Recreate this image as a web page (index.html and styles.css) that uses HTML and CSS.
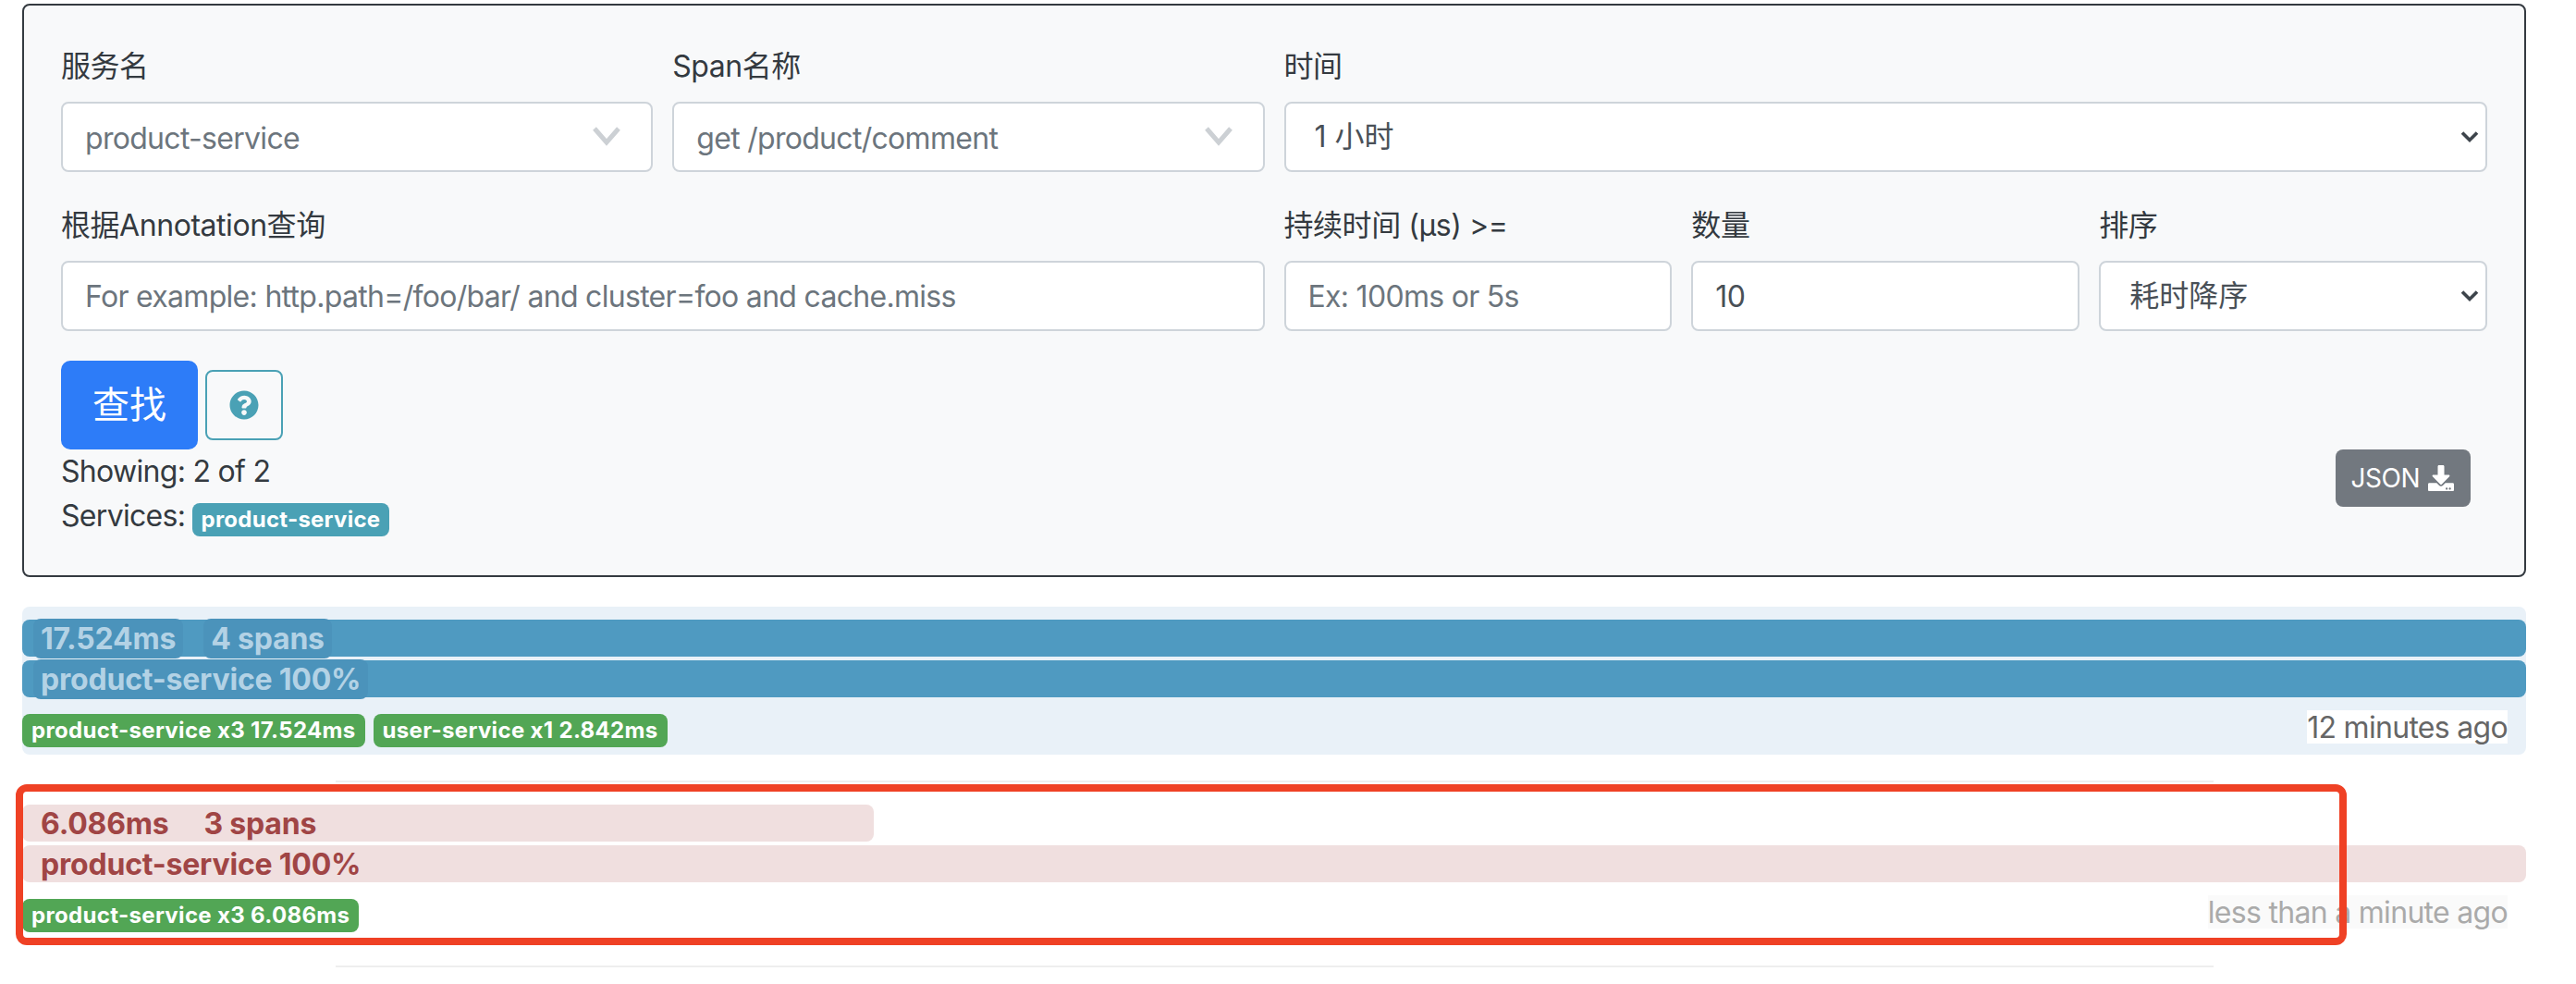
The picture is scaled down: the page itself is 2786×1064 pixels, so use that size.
FILE: index.html
```html
<!DOCTYPE html>
<html lang="zh">
<head>
<meta charset="utf-8">
<title>Zipkin</title>
<link rel="stylesheet" href="styles.css">
</head>
<body>
<main class="page">
  <form class="panel">
    <div class="form-grid">
      <div class="field col-3">
        <label class="label">服务名</label>
        <div class="control combo"><span class="combo-value">product-service</span>
          <svg class="combo-arrow" viewBox="0 0 32 22"><path d="M3 3 16 18 29 3" /></svg></div>
      </div>
      <div class="field col-3">
        <label class="label">Span名称</label>
        <div class="control combo"><span class="combo-value">get /product/comment</span>
          <svg class="combo-arrow" viewBox="0 0 32 22"><path d="M3 3 16 18 29 3" /></svg></div>
      </div>
      <div class="field col-6">
        <label class="label">时间</label>
        <div class="select-wrap">
          <select class="control select"><option>1 小时</option></select>
          <svg class="select-arrow" viewBox="0 0 20 14"><path d="M2 2.500 10 10.500 18 2.500" /></svg>
        </div>
      </div>
      <div class="field col-6">
        <label class="label">根据Annotation查询</label>
        <input class="control input" placeholder="For example: http.path=/foo/bar/ and cluster=foo and cache.miss">
      </div>
      <div class="field col-2">
        <label class="label">持续时间 (μs) &gt;=</label>
        <input class="control input" placeholder="Ex: 100ms or 5s">
      </div>
      <div class="field col-2">
        <label class="label">数量</label>
        <input class="control input" value="10">
      </div>
      <div class="field col-2">
        <label class="label">排序</label>
        <div class="select-wrap">
          <select class="control select"><option>耗时降序</option></select>
          <svg class="select-arrow" viewBox="0 0 20 14"><path d="M2 2.500 10 10.500 18 2.500" /></svg>
        </div>
      </div>
    </div>
    <div class="actions">
      <button type="button" class="btn-search">查找</button>
      <button type="button" class="btn-help" aria-label="help">
        <svg class="help-icon" viewBox="0 0 512 512"><path d="M504 256c0 136.997-111.043 248-248 248S8 392.997 8 256C8 119.083 119.043 8 256 8s248 111.083 248 248zM262.655 90c-54.497 0-89.255 22.957-116.549 63.758-3.536 5.286-2.353 12.415 2.715 16.258l34.699 26.31c5.205 3.947 12.621 3.008 16.665-2.122 17.864-22.658 30.113-35.797 57.303-35.797 20.429 0 45.698 13.148 45.698 32.958 0 14.976-12.363 22.667-32.534 33.976C247.128 238.528 216 254.941 216 296v4c0 6.627 5.373 12 12 12h56c6.627 0 12-5.373 12-12v-1.333c0-28.462 83.186-29.647 83.186-106.667 0-58.002-60.165-102-116.531-102zM256 338c-25.365 0-46 20.635-46 46 0 25.364 20.635 46 46 46s46-20.636 46-46c0-25.365-20.635-46-46-46z"/></svg>
      </button>
    </div>
    <div class="summary">
      <div class="summary-text">
        <div class="summary-line">Showing: 2 of 2</div>
        <div class="summary-line">Services: <span class="badge-service">product-service</span></div>
      </div>
      <button type="button" class="btn-json">JSON
        <svg class="json-icon" viewBox="0 0 512 512"><path d="M216 0h80c13.3 0 24 10.700 24 24v168h87.700c17.800 0 26.700 21.500 14.100 34.100L269.700 378.300c-7.500 7.500-19.800 7.500-27.300 0L90.100 226.100c-12.600-12.600-3.700-34.100 14.100-34.100H192V24c0-13.300 10.700-24 24-24zm296 376v112c0 13.300-10.700 24-24 24H24c-13.300 0-24-10.700-24-24V376c0-13.300 10.700-24 24-24h146.700l49 49c20.100 20.100 52.500 20.100 72.600 0l49-49H488c13.300 0 24 10.700 24 24zm-124 88c0-11-9-20-20-20s-20 9-20 20 9 20 20 20 20-9 20-20zm64 0c0-11-9-20-20-20s-20 9-20 20 9 20 20 20 20-9 20-20z"/></svg>
      </button>
    </div>
  </form>

  <section class="trace trace-blue">
    <div class="bar bar-blue">
      <span class="bar-label first">17.524ms</span><span class="bar-label second">4 spans</span>
    </div>
    <div class="bar bar-blue">
      <span class="bar-label first">product-service 100%</span>
    </div>
    <div class="trace-foot">
      <div class="tags">
        <span class="tag">product-service x3 17.524ms</span>
        <span class="tag">user-service x1 2.842ms</span>
      </div>
      <time class="ago ago-dark">12 minutes ago</time>
    </div>
  </section>
  <hr class="rule">
  <section class="trace trace-pale">
    <div class="bar bar-pink" style="width:34%">
      <span class="bar-label first">6.086ms</span><span class="bar-label second">3 spans</span>
    </div>
    <div class="bar bar-pink">
      <span class="bar-label first">product-service 100%</span>
    </div>
    <div class="trace-foot">
      <div class="tags">
        <span class="tag">product-service x3 6.086ms</span>
      </div>
      <time class="ago ago-light">less than a minute ago</time>
    </div>
  </section>
  <hr class="rule">
  <div class="annotation"></div>
</main>
</body>
</html>
```

FILE: styles.css
```css
* { box-sizing: border-box; }

html, body {
  margin: 0;
  background: #fff;
}

body {
  font-family: Inter, "Noto Sans CJK SC", sans-serif;
  font-size: 32px;
  line-height: 48px;
  letter-spacing: -0.7px;
  color: #343a40;
  height: 1064px;
  overflow: hidden;
}

.page {
  position: relative;
  width: 2732px;
  padding: 4px 0 0 24px;
}

.panel {
  height: 620px;
  padding: 40px 40px 0 40px;
  background: #f8f9fa;
  border: 2px solid #343a40;
  border-radius: 8px;
}

.form-grid {
  display: grid;
  grid-template-columns: repeat(12, 1fr);
  column-gap: 21px;
  row-gap: 32px;
}

.col-2 { grid-column: span 2; }
.col-3 { grid-column: span 3; }
.col-6 { grid-column: span 6; }

.label {
  display: block;
  height: 48px;
  margin-bottom: 16px;
  letter-spacing: -0.45px;
  line-height: 51px;
}

.control {
  display: block;
  width: 100%;
  height: 76px;
  padding: 0 24px;
  font: inherit;
  letter-spacing: inherit;
  line-height: 72px;
  color: #495057;
  background: #fff;
  border: 2px solid #ced4da;
  border-radius: 8px;
}

.input::placeholder { color: #6c757d; opacity: 1; }

.combo {
  display: flex;
  align-items: center;
  justify-content: space-between;
  padding: 4px 32px 0 24px;
}

.combo-value { color: #6c757d; }

.combo-arrow {
  width: 32px;
  height: 22px;
  margin-top: -6px;
}

.combo-arrow path {
  fill: none;
  stroke: #ccd0d4;
  stroke-width: 5;
}

.select-wrap { position: relative; }

.select {
  appearance: none;
  padding-left: 31px;
  letter-spacing: 0;
  outline: none;
}

.select-arrow {
  position: absolute;
  right: 9px;
  top: 31px;
  width: 20px;
  height: 14px;
  pointer-events: none;
}

.select-arrow path {
  fill: none;
  stroke: #3d444b;
  stroke-width: 3.600;
}

.actions {
  display: flex;
  align-items: center;
  gap: 8px;
  margin-top: 32px;
}

.btn-search {
  width: 148px;
  height: 96px;
  padding: 0;
  font: inherit;
  font-size: 40px;
  letter-spacing: 0;
  color: #fff;
  background: #2d7cf8;
  border: 0;
  border-radius: 10px;
}

.btn-help {
  display: flex;
  align-items: center;
  justify-content: center;
  width: 84px;
  height: 76px;
  padding: 0;
  background: transparent;
  border: 2px solid #4aa1b5;
  border-radius: 8px;
}

.help-icon {
  width: 32px;
  height: 32px;
  fill: #4aa1b5;
}

.summary {
  display: flex;
  justify-content: space-between;
  align-items: flex-start;
  padding-right: 18px;
}

.summary-line { height: 48px; }

.badge-service {
  display: inline-block;
  height: 36px;
  margin-left: -1px;
  padding: 0 10px;
  font-size: 24px;
  font-weight: 700;
  letter-spacing: 0.25px;
  line-height: 36px;
  color: #fff;
  background: #4aa1b5;
  border-radius: 8px;
  vertical-align: -1px;
}

.btn-json {
  display: flex;
  align-items: center;
  gap: 9px;
  height: 62px;
  padding: 0 18px 0 17px;
  font: inherit;
  font-size: 28px;
  letter-spacing: -0.5px;
  color: #fff;
  background: #72787f;
  border: 0;
  border-radius: 8px;
}

.json-icon {
  width: 28px;
  height: 28px;
  fill: #fff;
}

.trace {
  height: 160px;
  padding-top: 14px;
  border-radius: 8px;
}

.trace-blue {
  margin-top: 32px;
  background: #e9f1f8;
}

.bar {
  display: flex;
  align-items: center;
  height: 40px;
  margin-bottom: 4px;
  padding-left: 12px;
  border-radius: 8px;
}

.bar-blue { background: #4f9ac1; color: #b3d2e5; }
.bar-pink { background: #f0dfdf; color: #a04545; }

.bar-label {
  height: 43px;
  font-weight: 700;
  letter-spacing: -0.2px;
  line-height: 44px;
  border-radius: 8px;
}

.bar-blue .bar-label { background: #4b93bb; }

.first { padding: 0 8px; }
.second { margin-left: 22px; padding: 0 8px; }

.trace-foot {
  display: flex;
  justify-content: space-between;
  align-items: flex-start;
  margin-top: 14px;
  padding-right: 20px;
}

.tags {
  display: flex;
  gap: 9px;
  margin-top: 4px;
}

.tag {
  height: 36px;
  padding: 0 10px;
  font-size: 24px;
  font-weight: 700;
  letter-spacing: 0.33px;
  line-height: 36px;
  color: #fff;
  background: #52a655;
  border-radius: 8px;
}

.ago {
  height: 36px;
  line-height: 38px;
}

.ago-dark { color: #666; background: #fff; }
.ago-light { color: #aaa; background: #fafafa; }

.rule {
  width: 75%;
  height: 2px;
  margin: 28px auto 10px;
  background: #eee;
  border: 0;
}

.annotation {
  position: absolute;
  left: 17px;
  top: 848px;
  width: 2521px;
  height: 174px;
  border: 8px solid #ef4125;
  border-radius: 12px;
  pointer-events: none;
}
```
